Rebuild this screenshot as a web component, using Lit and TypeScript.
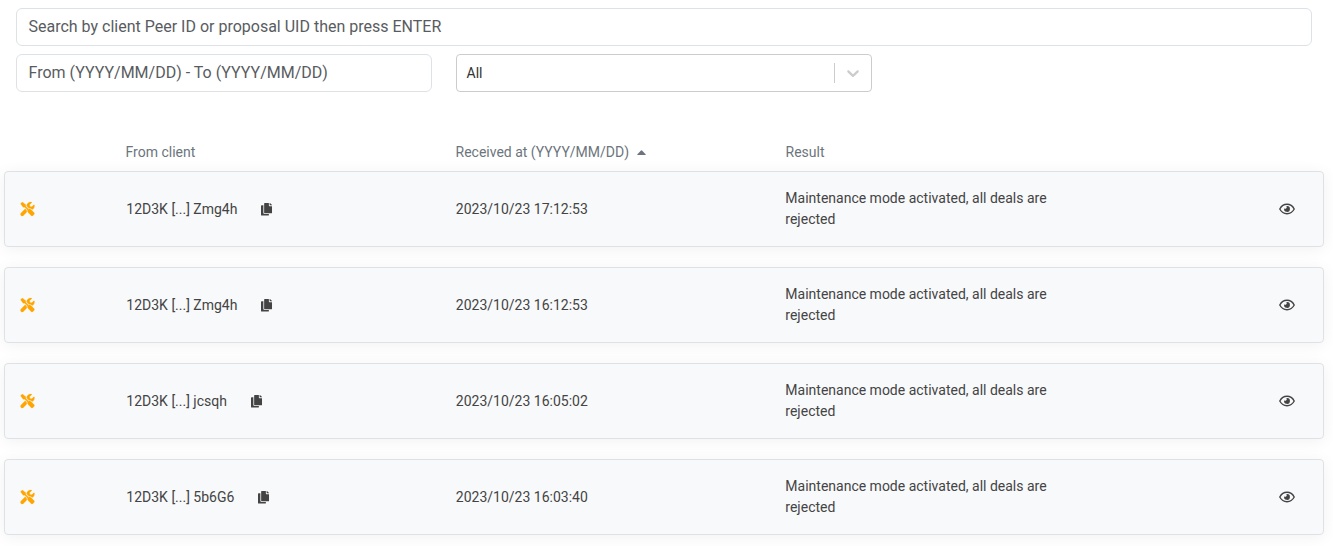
import { LitElement, html, css, svg } from "lit";
import { customElement, state } from "lit/decorators.js";

const TOOLS =
  "M501.1 395.7L384 278.6c-23.1-23.1-57.6-27.6-85.4-13.9L192 158.1V96L64 0 0 64l96 128h62.1l106.6 106.6c-13.6 27.8-9.2 62.3 13.9 85.4l117.1 117.1c14.6 14.6 38.2 14.6 52.7 0l52.7-52.7c14.5-14.6 14.5-38.2 0-52.7zM331.7 225c28.3 0 54.9 11 74.9 31l19.4 19.4c15.8-6.9 30.8-16.5 43.8-29.5 37.1-37.1 49.7-89.3 37.9-136.7-2.2-9-13.5-12.1-20.1-5.5l-74.4 74.4-67.9-11.3L334 98.9l74.4-74.4c6.6-6.6 3.4-17.9-5.7-20.2-47.4-11.7-99.6.9-136.6 37.9-28.5 28.5-41.9 66.1-41.2 103.6l82.1 82.1c8.1-1.9 16.5-2.9 24.7-2.9zm-103.9 82l-56.7-56.7L18.7 402.8c-25 25-25 65.5 0 90.5s65.5 25 90.5 0l123.6-123.6c-7.6-19.9-9.9-41.6-5-62.7z";
const COPY =
  "M320 448v40c0 13.255-10.745 24-24 24H24c-13.255 0-24-10.745-24-24V120c0-13.255 10.745-24 24-24h72v296c0 30.879 25.121 56 56 56h168zm0-344V0H152c-13.255 0-24 10.745-24 24v368c0 13.255 10.745 24 24 24h272c13.255 0 24-10.745 24-24V128H344c-13.2 0-24-10.8-24-24zm120.971-31.029L375.029 7.029A24 24 0 0 0 358.059 0H352v96h96v-6.059a24 24 0 0 0-7.029-16.97z";
const CHEVRON =
  "M4.516 7.548c0.436-0.446 1.043-0.481 1.576 0l3.908 3.747 3.908-3.747c0.533-0.481 1.141-0.446 1.574 0 0.436 0.445 0.408 1.197 0 1.615-0.406 0.418-4.695 4.502-4.695 4.502-0.217 0.223-0.502 0.335-0.787 0.335s-0.57-0.112-0.789-0.335c0 0-4.287-4.084-4.695-4.502s-0.436-1.17 0-1.615z";

interface Deal {
  client: string;
  received: string;
  result: string;
}

const REJECTED = "Maintenance mode activated, all deals are rejected";

@customElement("app-root")
export class AppRoot extends LitElement {
  static styles = css`
    :host {
      display: block;
      box-sizing: border-box;
      height: 546px;
      overflow: hidden;
      padding: 8px 9px 0 4px;
      background: #fff;
      color: #444;
      font: 14px/21px Roboto, sans-serif;
    }
    * {
      box-sizing: border-box;
    }
    .filters {
      display: grid;
      grid-template-columns: 416px 416px;
      gap: 8px 24px;
      padding: 0 12px;
      margin-bottom: 44px;
    }
    .field {
      display: block;
      width: 100%;
      height: 38px;
      padding: 5px 11.5px 7px;
      border: 1px solid #dee2e6;
      border-radius: 6px;
      background: #fff;
      color: #212529;
      font: 16px/24px Roboto, sans-serif;
      outline: 0;
    }
    .field::placeholder {
      color: #595c5f;
      opacity: 1;
    }
    .search {
      grid-column: 1 / -1;
      width: 1296px;
    }
    .select {
      display: flex;
      align-items: center;
      height: 38px;
      border: 1px solid #ccc;
      border-radius: 4px;
      color: #333;
    }
    .value {
      flex: 1;
      padding: 0 9.5px;
    }
    .separator {
      width: 1px;
      height: 20px;
      background: #ccc;
    }
    .chevron {
      width: 20px;
      height: 20px;
      margin: 0 8px;
      fill: #ccc;
    }
    .row {
      display: grid;
      grid-template-columns: 1fr 3fr 3fr 3fr 2fr;
      align-items: center;
      width: 1320px;
    }
    .row > div {
      padding: 0 12.5px 0 11.5px;
      min-width: 0;
    }
    .head {
      height: 35px;
      color: #6c757d;
      padding-bottom: 2px;
    }
    .sorted {
      display: flex;
      align-items: center;
      gap: 8px;
    }
    .caret {
      width: 9px;
      height: 5px;
      fill: currentColor;
    }
    .deal {
      height: 76px;
      margin-bottom: 20px;
      background: #f8f9fb;
      border: 1px solid #dee2e6;
      border-radius: 4px;
      box-shadow: 0 2px 16px rgba(0, 0, 0, 0.06);
    }
    .icon {
      display: block;
      height: 14px;
      fill: currentColor;
      overflow: visible;
    }
    .row > .status {
      color: orange;
      padding-left: 15px;
    }
    .tools {
      width: 15px;
      height: 14px;
      stroke: currentColor;
    }
    .client {
      display: flex;
      align-items: center;
      gap: 24px;
    }
    .row > .action {
      display: flex;
      justify-content: flex-end;
      padding-right: 28px;
    }
    .copy {
      height: 12.6px;
    }
    .eye {
      display: block;
      width: 16px;
      height: 12px;
    }
    .lid {
      fill: none;
      stroke: currentColor;
      stroke-width: 1.4;
    }
    .pupil {
      fill: currentColor;
    }
  `;

  @state() private deals: Deal[] = [
    { client: "12D3K [...] Zmg4h", received: "2023/10/23 17:12:53", result: REJECTED },
    { client: "12D3K [...] Zmg4h", received: "2023/10/23 16:12:53", result: REJECTED },
    { client: "12D3K [...] jcsqh", received: "2023/10/23 16:05:02", result: REJECTED },
    { client: "12D3K [...] 5b6G6", received: "2023/10/23 16:03:40", result: REJECTED },
  ];

  private icon(path: string, width: number, name: string) {
    return html`<svg class="icon ${name}" viewBox="0 0 ${width} 512" stroke-width="8" aria-hidden="true">
      ${svg`<path d=${path}></path>`}
    </svg>`;
  }

  private eye() {
    return html`<svg class="eye" viewBox="0 0 16 12" aria-hidden="true">
      <path class="lid" d="M.8 6C2.4 2.9 5 1.3 8 1.3S13.6 2.9 15.2 6C13.6 9.1 11 10.7 8 10.7S2.4 9.1.8 6Z"></path>
      <path class="pupil" d="M8 3.1A2.9 2.9 0 1 1 5.2 5.3 1.45 1.45 0 0 0 7.3 3.2Z"></path>
    </svg>`;
  }

  render() {
    return html`
      <div class="filters">
        <input class="field search" placeholder="Search by client Peer ID or proposal UID then press ENTER" />
        <input class="field" placeholder="From (YYYY/MM/DD) - To (YYYY/MM/DD)" />
        <div class="select">
          <span class="value">All</span>
          <span class="separator"></span>
          <svg class="chevron" viewBox="0 0 20 20"><path d=${CHEVRON}></path></svg>
        </div>
      </div>
      <div class="row head">
        <div></div>
        <div>From client</div>
        <div class="sorted">
          <span>Received at (YYYY/MM/DD)</span>
          <svg class="caret" viewBox="0 0 9 5"><path d="M.6 5Q0 5 .4 4.3L4 .4Q4.5 0 5 .4L8.6 4.3Q9 5 8.4 5Z"></path></svg>
        </div>
        <div>Result</div>
        <div></div>
      </div>
      ${this.deals.map(
        (deal) => html`
          <div class="row deal">
            <div class="status">${this.icon(TOOLS, 512, "tools")}</div>
            <div class="client"><span>${deal.client}</span>${this.icon(COPY, 448, "copy")}</div>
            <div>${deal.received}</div>
            <div>${deal.result}</div>
            <div class="action">${this.eye()}</div>
          </div>
        `
      )}
    `;
  }
}
